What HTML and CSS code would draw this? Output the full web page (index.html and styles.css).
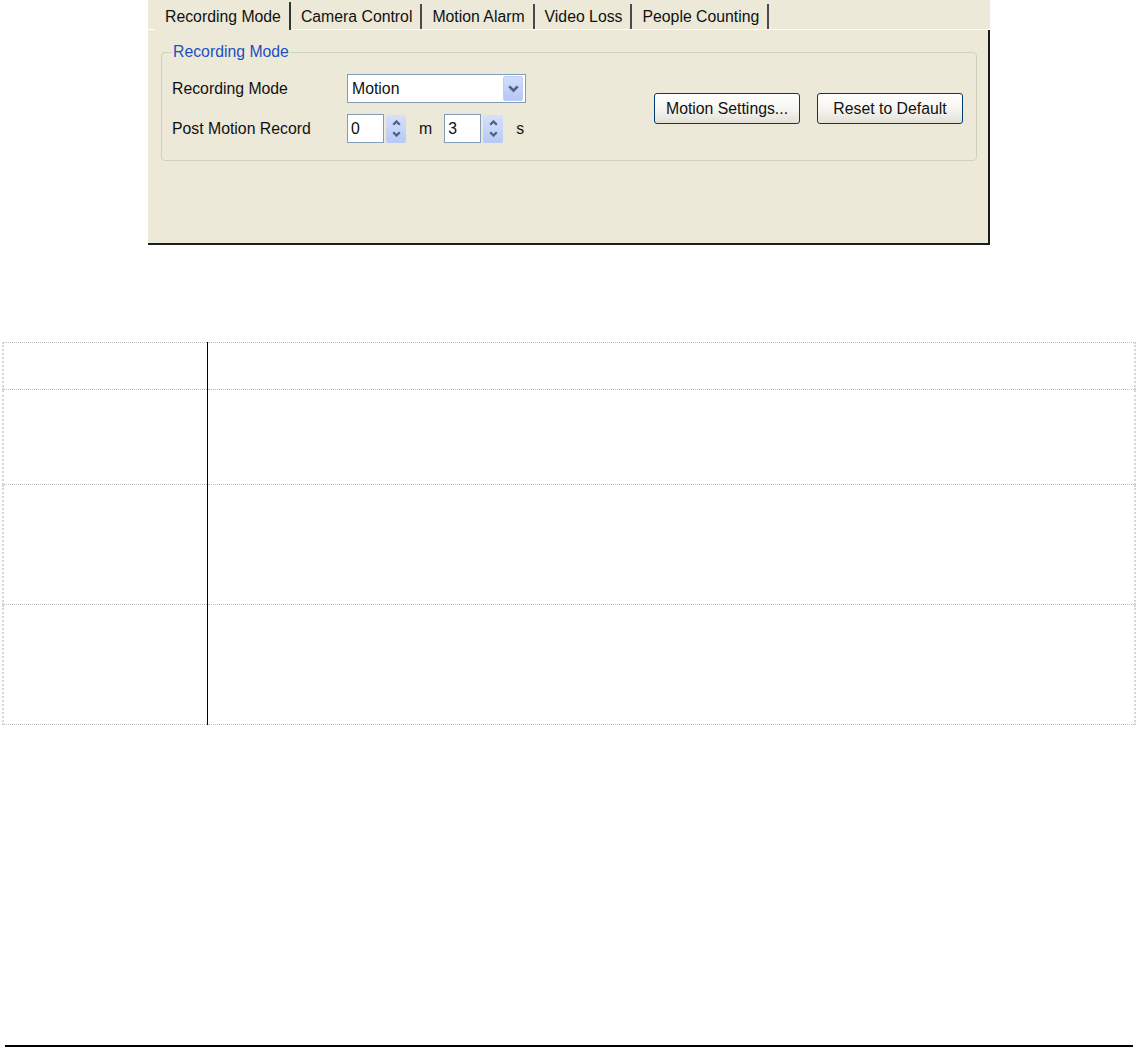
FILE: index.html
```html
<!DOCTYPE html>
<html lang="en">
<head>
    <meta charset="UTF-8">
    <meta name="viewport" content="width=device-width, initial-scale=1.0">
    <title>Recording Mode</title>
    <link rel="stylesheet" href="styles.css">
</head>
<body>
    <div class="settings-window">
        <div class="tab-strip">
            <div class="tab selected">Recording Mode</div>
            <div class="tab">Camera Control</div>
            <div class="tab">Motion Alarm</div>
            <div class="tab">Video Loss</div>
            <div class="tab">People Counting</div>
        </div>

        <div class="tab-panel">
            <fieldset class="group">
                <legend>Recording Mode</legend>
                <div class="group-body">
                    <div class="fields">
                        <!-- Recording mode combo -->
                        <div class="field-row">
                            <span class="field-label">Recording Mode</span>
                            <div class="combo">
                                <span class="combo-value">Motion</span>
                                <span class="combo-btn">
                                    <svg width="11" height="8" viewBox="0 0 11 8"><path d="M1.3 1.3 L5.5 5.6 L9.7 1.3" fill="none" stroke="#4d6185" stroke-width="2.6"/></svg>
                                </span>
                            </div>
                        </div>

                        <!-- Post motion record spinners -->
                        <div class="field-row">
                            <span class="field-label">Post Motion Record</span>
                            <div class="spinner">
                                <span class="spin-value">0</span>
                                <span class="spin-btn">
                                    <svg width="9" height="6" viewBox="0 0 9 6"><path d="M1.2 4.8 L4.5 1.5 L7.8 4.8" fill="none" stroke="#4d6185" stroke-width="2.3"/></svg>
                                    <svg width="9" height="6" viewBox="0 0 9 6"><path d="M1.2 1.2 L4.5 4.5 L7.8 1.2" fill="none" stroke="#4d6185" stroke-width="2.3"/></svg>
                                </span>
                            </div>
                            <span class="unit">m</span>
                            <div class="spinner">
                                <span class="spin-value">3</span>
                                <span class="spin-btn">
                                    <svg width="9" height="6" viewBox="0 0 9 6"><path d="M1.2 4.8 L4.5 1.5 L7.8 4.8" fill="none" stroke="#4d6185" stroke-width="2.3"/></svg>
                                    <svg width="9" height="6" viewBox="0 0 9 6"><path d="M1.2 1.2 L4.5 4.5 L7.8 1.2" fill="none" stroke="#4d6185" stroke-width="2.3"/></svg>
                                </span>
                            </div>
                            <span class="unit">s</span>
                        </div>
                    </div>

                    <div class="actions">
                        <button class="xp-button">Motion Settings...</button>
                        <button class="xp-button">Reset to Default</button>
                    </div>
                </div>
            </fieldset>
        </div>
    </div>

    <table class="desc-table">
        <tr class="row-head"><td class="col-key"></td><td class="col-desc"></td></tr>
        <tr class="row-mid"><td class="col-key"></td><td class="col-desc"></td></tr>
        <tr class="row-tall"><td class="col-key"></td><td class="col-desc"></td></tr>
        <tr class="row-tall"><td class="col-key"></td><td class="col-desc"></td></tr>
    </table>

    <div class="page-rule"></div>
</body>
</html>
```

FILE: styles.css
```css
body {
    margin: 0;
    background: #fff;
    font-family: "Liberation Sans", Arial, sans-serif;
}
.settings-window {
    margin-left: 148px;
    width: 842px;
    background-color: #ece9d8;
    font-size: 15.8px;
    color: #111;
}
.tab-strip {
    display: flex;
    height: 25px;
    padding: 4px 0 0 7px;
    border-bottom: 1px solid #fff;
}
.tab {
    height: 25px;
    line-height: 25px;
    padding: 0 8px 0 10px;
    border-right: 2px solid #4a4a4a;
    white-space: nowrap;
}
.tab.selected {
    margin-top: -2px;
    height: 28px;
    line-height: 29px;
    margin-bottom: -1px;
    background-color: #ece9d8;
    border-right-color: #333;
}
.tab-panel {
    box-sizing: border-box;
    height: 215px;
    padding: 12px 11px 0 13px;
    border-right: 2px solid #1c1c1c;
    border-bottom: 2px solid #1c1c1c;
}
.group {
    margin: 0;
    padding: 14px 13px 17px 10px;
    border: 1px solid #d0d0bf;
    border-radius: 4px;
}
.group legend {
    padding: 0 1px;
    line-height: 20px;
    color: #1c4fc4;
}
.group-body {
    display: flex;
    align-items: center;
    margin-top: -2px;
}
.fields {
    display: flex;
    flex-direction: column;
    gap: 11px;
}
.field-row {
    display: flex;
    align-items: center;
    height: 29px;
}
.field-label {
    width: 175px;
}
.combo {
    box-sizing: border-box;
    display: flex;
    align-items: center;
    width: 179px;
    height: 29px;
    padding-left: 4px;
    background: #fff;
    border: 1px solid #7f9db9;
}
.combo-btn {
    margin: 0 2px 0 auto;
    width: 20px;
    height: 25px;
    display: flex;
    align-items: center;
    justify-content: center;
    border-radius: 2px;
    background: linear-gradient(#d3defd, #b3c6f5);
    border: 1px solid #bccef7;
    box-sizing: border-box;
}
.spinner {
    display: flex;
    align-items: center;
    height: 29px;
}
.spin-value {
    box-sizing: border-box;
    width: 37px;
    height: 29px;
    line-height: 27px;
    padding-left: 3px;
    background: #fff;
    border: 1px solid #7f9db9;
}
.spin-btn {
    margin-left: 2px;
    width: 20px;
    height: 28px;
    display: flex;
    flex-direction: column;
    align-items: center;
    justify-content: center;
    gap: 5px;
    border-radius: 2px;
    background: linear-gradient(#d6e0fc, #b7c9f6);
}
.unit {
    margin: 0 12px 0 13px;
}
.actions {
    display: flex;
    gap: 17px;
    margin: 0 0 0 auto;
}
.xp-button {
    width: 146px;
    height: 31px;
    padding: 0;
    font-family: inherit;
    font-size: 15.8px;
    color: #111;
    border: 1px solid #003c74;
    border-radius: 3px;
    background: linear-gradient(#ffffff, #f5f4ef 55%, #e2e0d6);
    cursor: pointer;
}
.desc-table {
    margin: 97px 0 0 2px;
    width: 1134px;
    border-collapse: collapse;
}
.desc-table td {
    padding: 0;
    border-top: 1px dotted #bdbdbd;
    border-bottom: 1px dotted #bdbdbd;
}
.desc-table .col-key {
    width: 203px;
    border-left: 2px dotted #d6d6d6;
}
.desc-table .col-desc {
    border-left: 1px solid #000;
    border-right: 2px dotted #d6d6d6;
}
.row-head {
    height: 47px;
}
.row-mid {
    height: 95px;
}
.row-tall {
    height: 120px;
}
.page-rule {
    margin: 320px 0 0 5px;
    width: 1128px;
    height: 2px;
    background: #000;
}
```
